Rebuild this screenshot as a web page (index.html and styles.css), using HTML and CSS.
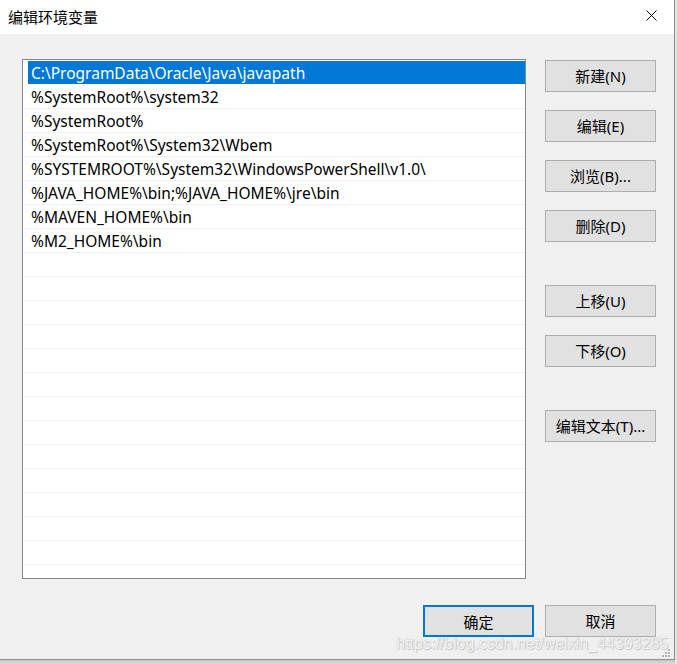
FILE: index.html
```html
<!DOCTYPE html>
<html lang="zh">
<head>
<meta charset="utf-8">
<title>编辑环境变量</title>
<link rel="stylesheet" href="styles.css">
</head>
<body>
<div class="window">
  <div class="titlebar">
    <span class="title">编辑环境变量</span>
    <div class="close">
      <svg width="11" height="11" viewBox="0 0 11 11"><path d="M0.5 0.5 L10.5 10.5 M10.5 0.5 L0.5 10.5" stroke="#000" stroke-width="1" fill="none"/></svg>
    </div>
  </div>
  <div class="body">
    <div class="main">
      <div class="list">
        <div class="row selected">C:\ProgramData\Oracle\Java\javapath</div>
        <div class="row">%SystemRoot%\system32</div>
        <div class="row">%SystemRoot%</div>
        <div class="row">%SystemRoot%\System32\Wbem</div>
        <div class="row">%SYSTEMROOT%\System32\WindowsPowerShell\v1.0\</div>
        <div class="row">%JAVA_HOME%\bin;%JAVA_HOME%\jre\bin</div>
        <div class="row">%MAVEN_HOME%\bin</div>
        <div class="row">%M2_HOME%\bin</div>
        <div class="row"></div>
        <div class="row"></div>
        <div class="row"></div>
        <div class="row"></div>
        <div class="row"></div>
        <div class="row"></div>
        <div class="row"></div>
        <div class="row"></div>
        <div class="row"></div>
        <div class="row"></div>
        <div class="row"></div>
        <div class="row"></div>
        <div class="row"></div>
        <div class="row"></div>
      </div>
      <div class="side">
        <button class="btn">新建(N)</button>
        <button class="btn">编辑(E)</button>
        <button class="btn">浏览(B)...</button>
        <button class="btn">删除(D)</button>
        <button class="btn group">上移(U)</button>
        <button class="btn">下移(O)</button>
        <button class="btn group">编辑文本(T)...</button>
      </div>
    </div>
    <div class="footer">
      <button class="btn focused">确定</button>
      <button class="btn">取消</button>
    </div>
  </div>
  <div class="watermark">https://blog.csdn.net/weixin_44393285</div>
  <svg class="grip" width="9" height="9" viewBox="0 0 9 9">
    <rect x="6" y="0" width="2" height="2" fill="#b8b8b8"/>
    <rect x="3" y="3" width="2" height="2" fill="#b8b8b8"/>
    <rect x="6" y="3" width="2" height="2" fill="#b8b8b8"/>
    <rect x="0" y="6" width="2" height="2" fill="#b8b8b8"/>
    <rect x="3" y="6" width="2" height="2" fill="#b8b8b8"/>
    <rect x="6" y="6" width="2" height="2" fill="#b8b8b8"/>
  </svg>
</div>
<div class="shadow"></div>
</body>
</html>
```
FILE: styles.css
```css
html, body {
  margin: 0;
  padding: 0;
}
body {
  width: 677px;
  height: 664px;
  overflow: hidden;
  background: #e4e4e4;
  font-family: "Noto Sans", "Noto Sans CJK SC", sans-serif;
}
.window {
  position: relative;
  width: 675px;
  height: 660px;
  box-sizing: border-box;
  background: #f0f0f0;
  border-right: 1px solid #8c8c8c;
  border-bottom: 1px solid #8c8c8c;
  display: flex;
  flex-direction: column;
}
.shadow {
  height: 4px;
  width: 675px;
  background: linear-gradient(#c4c4c4, #dcdcdc);
}
.titlebar {
  height: 34px;
  background: #fff;
  display: flex;
  align-items: center;
  justify-content: space-between;
  padding-left: 8px;
}
.title {
  font-family: "Noto Sans CJK SC", sans-serif;
  font-size: 15px;
  color: #000;
  margin-top: -2px;
}
.close {
  width: 46px;
  height: 34px;
  display: flex;
  align-items: center;
  justify-content: center;
  margin-top: -3px;
}
.body {
  padding: 25px 0 0 22px;
}
.main {
  display: flex;
  align-items: flex-start;
}
.list {
  width: 504px;
  height: 520px;
  box-sizing: border-box;
  border: 1px solid #828790;
  background: #fff;
  padding: 1px 0 0 1px;
  overflow: hidden;
}
.row {
  height: 23px;
  border-bottom: 1px solid #f0f0f0;
  padding-left: 7px;
  font-family: "Noto Sans", sans-serif;
  font-size: 15.5px;
  line-height: 25px;
  color: #000;
  white-space: nowrap;
  overflow: hidden;
}
.row.selected {
  background: linear-gradient(90deg, transparent 4px, #0078d7 4px);
  color: #fff;
  border-bottom-color: #fff;
}
.side {
  margin-left: 19px;
  padding-top: 1px;
  display: flex;
  flex-direction: column;
  gap: 18px;
}
.btn {
  width: 111px;
  height: 32px;
  box-sizing: border-box;
  border: 1px solid #adadad;
  background: #e1e1e1;
  font-family: "Noto Sans", "Noto Sans CJK SC", sans-serif;
  font-size: 15px;
  color: #000;
  padding: 0;
  margin: 0;
  line-height: 30px;
  text-align: center;
}
.btn.group {
  margin-top: 25px;
}
.btn.focused {
  border: 2px solid #0078d7;
}
.footer {
  width: 634px;
  margin-top: 26px;
  display: flex;
  justify-content: flex-end;
  gap: 11px;
}
.watermark {
  position: absolute;
  left: 396px;
  top: 635px;
  font-family: "Liberation Sans", sans-serif;
  font-size: 16px;
  color: rgba(255, 255, 255, 0.85);
  text-shadow: 0 0 1px #b0b0b0, 1px 1px 1px #cacaca;
  white-space: nowrap;
}
.grip {
  position: absolute;
  left: 662px;
  top: 649px;
}
```
